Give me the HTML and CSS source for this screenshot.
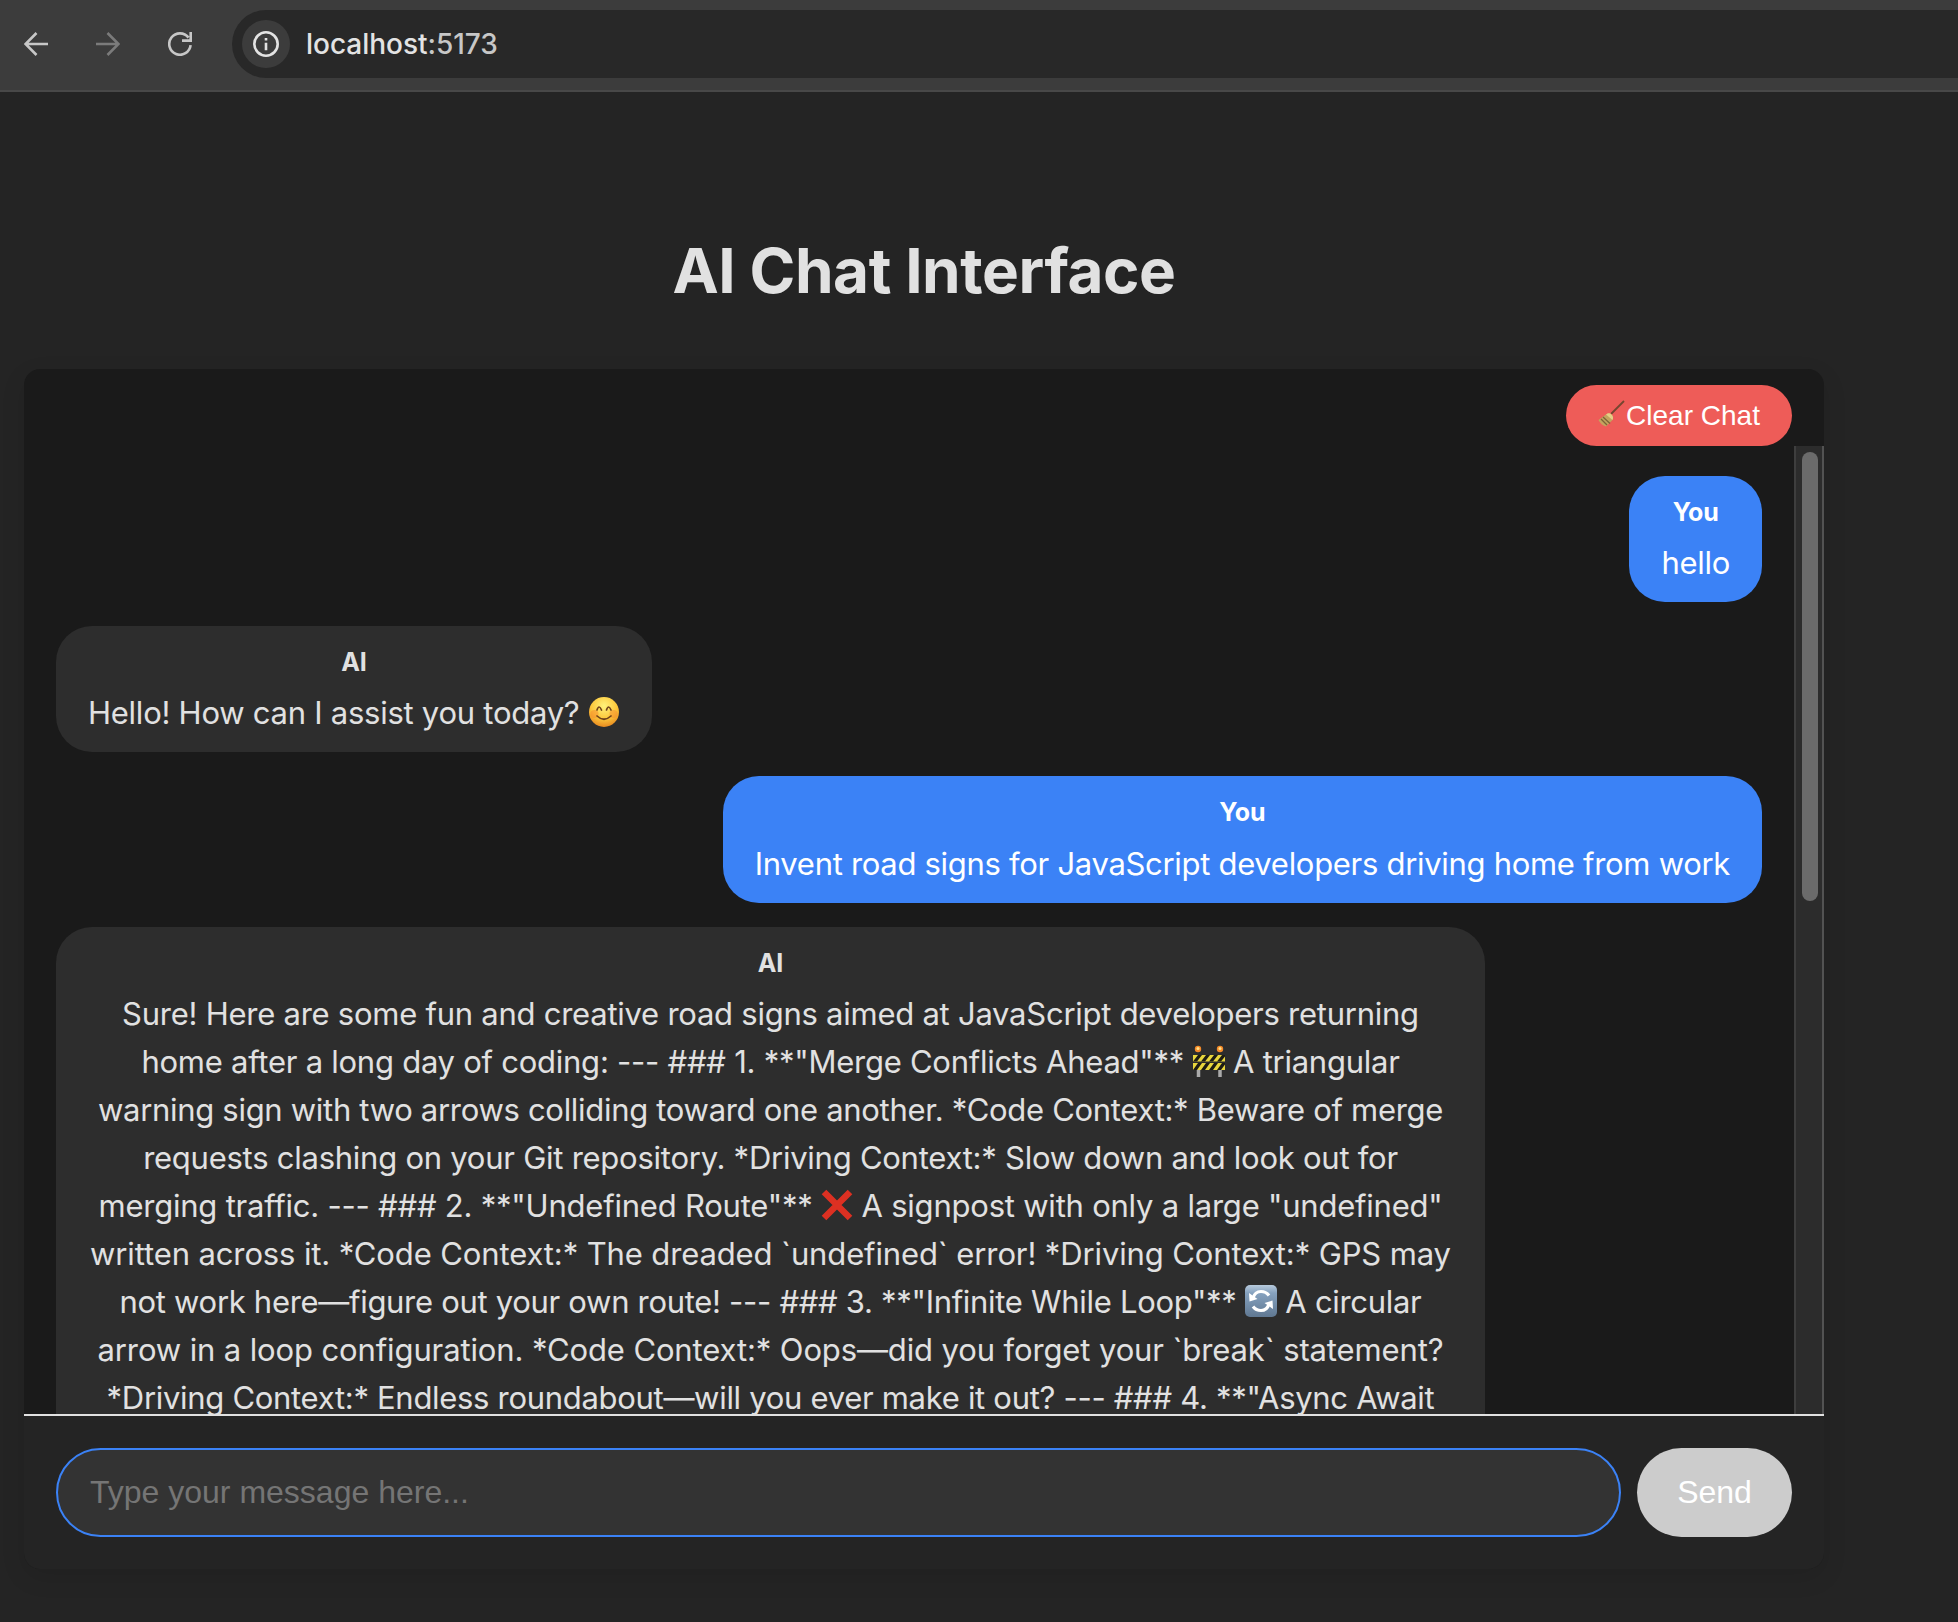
FILE: index.html
```
<!DOCTYPE html>
<html lang="en">
<head>
<meta charset="utf-8">
<title>AI Chat Interface</title>
<link rel="stylesheet" href="styles.css">
</head>
<body>
<header class="toolbar">
  <svg class="nav-icon" viewBox="0 0 24 24"><path d="M24 12H2M12.500 1 1.500 12l11 11"/></svg>
  <svg class="nav-icon dim" viewBox="0 0 24 24"><path d="M0 12h22M11.500 1l11 11-11 11"/></svg>
  <svg class="nav-icon" viewBox="0 0 24 24"><path d="M22.600 13.200A10.700 10.700 0 1 1 20.500 5.600M22.700 0v8.600H14"/></svg>
  <div class="address">
    <span class="site-info"><svg viewBox="0 0 26 26"><circle cx="13" cy="13" r="11.700"/><path d="M13 11.800v7.500M13 7v2.600"/></svg></span>
    <span class="url">localhost<span class="port">:5173</span></span>
  </div>
</header>
<main class="page">
  <h1 class="title">AI Chat Interface</h1>
  <section class="chat">
    <div class="chat-head">
      <button class="clear" type="button"><svg class="broom" viewBox="0 0 27 27"><path d="M26 1 13 14" stroke="#75462f" stroke-width="1.800"/><path d="M8 14.500q3-2.500 5.500 0t1 5.500L8 26.500Q3 25 .500 20z" fill="#c3a45e"/><path d="M8 14.500q3-2.500 5.500 0t1 5.500z" fill="#e5cf85"/><path d="m5 17 7 6.500M3 19l6 6" stroke="#7d6337" stroke-width="1.300"/></svg><span>Clear Chat</span></button>
    </div>
    <div class="body">
      <div class="messages">
        <article class="msg user"><strong>You</strong><p><span class="line">hello</span></p></article>
        <article class="msg ai"><strong>AI</strong><p><span class="line">Hello! How can I assist you today? <svg class="emoji" viewBox="0 0 32 32"><defs><radialGradient id="face" cx=".5" cy=".3" r=".7"><stop offset="0" stop-color="#fff27a"/><stop offset=".6" stop-color="#fcc83c"/><stop offset="1" stop-color="#e98a20"/></radialGradient></defs><circle cx="16" cy="16" r="15" fill="url(#face)"/><circle cx="6.500" cy="18" r="4" fill="#f58a2e" opacity=".5"/><circle cx="25.500" cy="18" r="4" fill="#f58a2e" opacity=".5"/><path d="M9 14q2-6 4.500 0M18.500 14q2-6 4.500 0M9 20q7 6.500 14 0" fill="none" stroke="#70431a" stroke-width="1.700" stroke-linecap="round"/></svg></span></p></article>
        <article class="msg user second"><strong>You</strong><p><span class="line">Invent road signs for JavaScript developers driving home from work</span></p></article>
        <article class="msg ai long"><strong>AI</strong><p>
          <span class="line">Sure! Here are some fun and creative road signs aimed at JavaScript developers returning</span>
          <span class="line">home after a long day of coding: --- ### 1. **"Merge Conflicts Ahead"** <svg class="emoji" viewBox="0 0 32 32"><path d="M5.500 24v8M27 24v8M5.500 10v5M27 10v5" stroke="#aaa" stroke-width="3.500"/><circle cx="5" cy="4" r="3.200" fill="#f58a28"/><circle cx="27" cy="4" r="3.200" fill="#f58a28"/><circle cx="5" cy="3.500" r="1.500" fill="#ffe08a"/><circle cx="27" cy="3.500" r="1.500" fill="#ffe08a"/><path d="M0 10h32v6.500H0zM0 18h32v7H0z" fill="#e8d63c"/><path d="m0 16.500 5-6.500h4l-5 6.500zM8 16.500l5-6.500h4l-5 6.500zM16 16.500l5-6.500h4l-5 6.500zM24 16.500l5-6.500h3v1.500l-4 5zM0 25l5-7h4l-5 7zM8 25l5-7h4l-5 7zM16 25l5-7h4l-5 7zM24 25l5-7h3v1.500L28 25z" fill="#1d1c14"/></svg> A triangular</span>
          <span class="line">warning sign with two arrows colliding toward one another. *Code Context:* Beware of merge</span>
          <span class="line">requests clashing on your Git repository. *Driving Context:* Slow down and look out for</span>
          <span class="line">merging traffic. --- ### 2. **"Undefined Route"** <svg class="emoji" viewBox="0 0 32 32"><path d="m3 3 26 26M29 3 3 29" stroke="#dd3022" stroke-width="6.500"/></svg> A signpost with only a large "undefined"</span>
          <span class="line">written across it. *Code Context:* The dreaded `undefined` error! *Driving Context:* GPS may</span>
          <span class="line">not work here—figure out your own route! --- ### 3. **"Infinite While Loop"** <svg class="emoji" viewBox="0 0 32 32"><defs><linearGradient id="tile" x2="0" y2="1"><stop stop-color="#b8cbdd"/><stop offset=".25" stop-color="#86a2bf"/><stop offset="1" stop-color="#607892"/></linearGradient></defs><rect width="32" height="32" rx="5" fill="url(#tile)"/><path d="M8 13q2-6.500 8-6.500 5 0 8 4M24 19q-2 6.500-8 6.500-5 0-8-4" fill="none" stroke="#fff" stroke-width="3.200"/><path d="m4 8 .500 8.500 8-2.500zM28 24l-.500-8.500-8 2.500z" fill="#fff"/></svg> A circular</span>
          <span class="line">arrow in a loop configuration. *Code Context:* Oops—did you forget your `break` statement?</span>
          <span class="line">*Driving Context:* Endless roundabout—will you ever make it out? --- ### 4. **"Async Await</span>
        </p></article>
      </div>
      <div class="track"><div class="thumb"></div></div>
    </div>
    <form class="composer">
      <input class="field" type="text" placeholder="Type your message here...">
      <button class="send" type="button">Send</button>
    </form>
  </section>
</main>
</body>
</html>
```
FILE: styles.css
```
* { box-sizing: border-box; }
body { margin: 0; height: 1622px; overflow: hidden; background: #242424; color: #e1e1e1; font-family: Inter, "Noto Sans", sans-serif; }
svg { fill: none; flex: none; }

/* Browser toolbar */
.toolbar { display: flex; align-items: center; height: 92px; padding: 0 0 2px 24px; background: #3c3c3c; border-bottom: 2px solid #484848; }
.nav-icon { width: 24px; height: 24px; margin-right: 48px; stroke: #c7c7c7; stroke-width: 2.600; }
.nav-icon.dim { stroke: #7b7b7b; }
.address { display: flex; align-items: center; flex: 1; height: 68px; margin-left: -8px; padding-left: 10px; background: #282828; border-radius: 34px 0 0 34px; }
.site-info { display: grid; place-items: center; width: 48px; height: 48px; border-radius: 50%; background: #3c3c3c; }
.site-info svg { width: 26px; height: 26px; stroke: #e3e3e3; stroke-width: 2.600; }
.url { margin-left: 16px; font-size: 28px; font-weight: 450; letter-spacing: -.03px; color: #e3e3e3; }
.port { color: #c7c7c7; }

/* Page and chat card */
.page { width: 1848px; padding: 0 24px; }
.title { margin: 0; height: 277px; padding-top: 140px; text-align: center; font-size: 62px; line-height: 77px; font-weight: 700; letter-spacing: -.45px; }
.chat { display: flex; flex-direction: column; height: 1200px; border-radius: 16px; overflow: hidden; background: #1a1a1a; box-shadow: 0 8px 24px rgba(0,0,0,.1); }
.chat-head { display: flex; justify-content: flex-end; padding: 16px 32px 0; height: 77px; }
.clear { display: flex; align-items: center; justify-content: center; width: 226px; height: 61px; padding: 0; border: 0; border-radius: 30.500px; background: #ee5c58; color: #fff; font: 28px "Liberation Sans", sans-serif; }
.broom { width: 27px; height: 27px; margin: 0 1px 4px 0; }

/* Messages */
.body { display: flex; height: 968px; overflow: hidden; }
.messages { display: flex; flex-direction: column; flex: 1; gap: 24px; padding: 30px 32px 0; }
.msg { flex: none; align-self: flex-start; padding: 17px 32px 15px; border-radius: 36px; background: #2d2d2d; text-align: center; }
.msg.user { align-self: flex-end; background: #3b82f6; color: #fff; }
.msg.long { width: 1429px; padding-bottom: 63px; }
.msg strong { display: block; margin-bottom: 8px; font-size: 25px; line-height: 38px; font-weight: 700; letter-spacing: -.1px; }
.msg.second strong { margin-bottom: 9px; }
.msg p { margin: 0; font-size: 31px; line-height: 48px; letter-spacing: -.3px; }
.msg.ai p { letter-spacing: -.25px; }
.line { display: block; height: 48px; white-space: nowrap; }
.long .line:nth-child(3), .long .line:nth-child(7), .long .line:nth-child(9) { letter-spacing: -.3px; }
.long .line:nth-child(5) { letter-spacing: -.22px; }
.long .line:nth-child(6), .long .line:nth-child(8) { letter-spacing: -.12px; }
.emoji { width: 32px; height: 32px; vertical-align: -4px; }
.track { width: 30px; padding: 6px 4px 0 6px; background: #2c2c2c; border-left: 2px solid #3e3e3e; border-right: 2px solid #525252; }
.thumb { width: 16px; height: 449px; border-radius: 8px; background: #6b6b6b; }

/* Composer */
.composer { display: flex; gap: 16px; height: 155px; padding: 32px; border-top: 2px solid #e1e1e1; background: #242424; }
.field { flex: 1; height: 89px; padding: 0 32px; border: 2px solid #3b82f6; border-radius: 45px; outline: 0; background: #333; color: #e1e1e1; font: 32px "Liberation Sans", sans-serif; }
.field::placeholder { color: #757575; }
.send { width: 155px; height: 89px; padding: 0; border: 0; border-radius: 45px; background: #ccc; color: #fff; font: 32px "Liberation Sans", sans-serif; }
```
